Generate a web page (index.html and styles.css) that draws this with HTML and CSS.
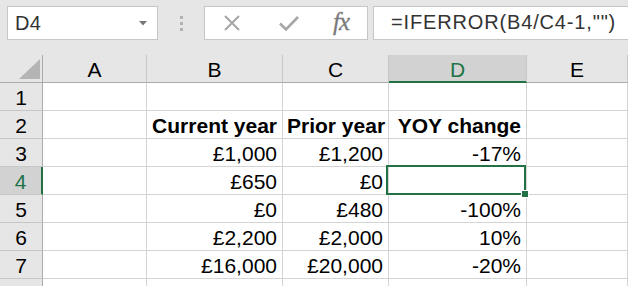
FILE: index.html
```html
<!DOCTYPE html>
<html>
<head>
<meta charset="utf-8">
<link rel="stylesheet" href="styles.css">
</head>
<body>
<div class="app">
  <div class="toolbar">
    <div class="namebox">
      <span class="name">D4</span>
      <svg class="caret" width="8" height="5" viewBox="0 0 8 5"><path d="M0 0H8L4 4.5Z" fill="#777"/></svg>
    </div>
    <div class="grip"><i></i><i></i><i></i></div>
    <div class="fbuttons">
      <svg class="ico" width="20" height="20" viewBox="0 0 20 20"><path d="M3 3L17 17M17 3L3 17" stroke="#a6a6a6" stroke-width="2" fill="none"/></svg>
      <svg class="ico" width="22" height="20" viewBox="0 0 22 20"><path d="M2 10.5L8 16.5L20 4" stroke="#a6a6a6" stroke-width="2.6" fill="none"/></svg>
      <span class="fx">fx</span>
    </div>
    <div class="formula">=IFERROR(B4/C4-1,"")</div>
  </div>
  <div class="grid">
    <div class="corner"><svg width="21" height="20" viewBox="0 0 21 20"><path d="M0 20H21V0Z" fill="#b4b4b4"/></svg></div>
    <div class="ch">A</div><div class="ch">B</div><div class="ch">C</div><div class="ch sel">D</div><div class="ch">E</div>

    <div class="rh">1</div><div class="c"></div><div class="c"></div><div class="c"></div><div class="c"></div><div class="c"></div>

    <div class="rh">2</div><div class="c"></div><div class="c b">Current year</div><div class="c b">Prior year</div><div class="c b">YOY change</div><div class="c"></div>

    <div class="rh">3</div><div class="c"></div><div class="c">£1,000</div><div class="c">£1,200</div><div class="c">-17%</div><div class="c"></div>

    <div class="rh sel">4</div><div class="c"></div><div class="c">£650</div><div class="c">£0</div><div class="c active"><span class="selbox"><span class="handle"></span></span></div><div class="c"></div>

    <div class="rh">5</div><div class="c"></div><div class="c">£0</div><div class="c">£480</div><div class="c">-100%</div><div class="c"></div>

    <div class="rh">6</div><div class="c"></div><div class="c">£2,200</div><div class="c">£2,000</div><div class="c">10%</div><div class="c"></div>

    <div class="rh">7</div><div class="c"></div><div class="c">£16,000</div><div class="c">£20,000</div><div class="c">-20%</div><div class="c"></div>

    <div class="rh">8</div><div class="c"></div><div class="c"></div><div class="c"></div><div class="c"></div><div class="c"></div>
  </div>
</div>
</body>
</html>
```

FILE: styles.css
```css
html, body {
  margin: 0;
  padding: 0;
}
body {
  width: 628px;
  height: 286px;
  overflow: hidden;
  background: #e6e6e6;
  font-family: "Liberation Sans", Arial, sans-serif;
}
.app {
  width: 628px;
}
.toolbar {
  height: 55px;
  box-sizing: border-box;
  padding: 6px 0 0 7px;
  display: flex;
  align-items: flex-start;
  background: #e6e6e6;
}
.namebox {
  width: 151px;
  height: 34px;
  box-sizing: border-box;
  border: 1px solid #c6c6c6;
  background: #fff;
  display: flex;
  align-items: center;
  justify-content: space-between;
  padding: 0 10px 0 7px;
}
.name {
  font-size: 20px;
  color: #333;
  letter-spacing: 0.3px;
}
.caret {
  margin-top: 1px;
}
.grip {
  width: 46px;
  height: 34px;
  display: flex;
  flex-direction: column;
  align-items: center;
  justify-content: center;
  gap: 3px;
}
.grip i {
  display: block;
  width: 3px;
  height: 3px;
  background: #b3b3b3;
}
.fbuttons {
  width: 164px;
  height: 34px;
  box-sizing: border-box;
  border: 1px solid #c6c6c6;
  background: #fff;
  display: flex;
  align-items: center;
  padding-left: 17px;
}
.fbuttons .ico:nth-child(2) {
  margin-left: 36px;
}
.fx {
  font-family: "Liberation Serif", "Times New Roman", serif;
  font-style: italic;
  font-size: 25px;
  color: #7a7a7a;
  margin-left: 33px;
  margin-top: -3px;
  letter-spacing: -1px;
  -webkit-text-stroke: 0.3px #7a7a7a;
}
.formula {
  margin-left: 5px;
  flex: 1;
  height: 34px;
  box-sizing: border-box;
  border: 1px solid #c6c6c6;
  border-right: none;
  background: #fff;
  font-size: 20px;
  letter-spacing: 0.85px;
  color: #333;
  line-height: 31px;
  padding-left: 17px;
  white-space: nowrap;
}
.grid {
  display: grid;
  grid-template-columns: 43px 104px 136px 106px 138px 1fr;
  grid-auto-rows: 28px;
  background: #fff;
}
.corner, .ch, .rh {
  background: #e6e6e6;
  box-sizing: border-box;
  font-size: 21px;
  color: #000;
}
.corner {
  border-right: 1px solid #ababab;
  border-bottom: 1px solid #ababab;
  display: flex;
  align-items: flex-end;
  justify-content: flex-end;
  padding: 0 2px 3px 0;
}
.ch {
  border-right: 1px solid #c6c6c6;
  border-bottom: 1px solid #ababab;
  text-align: center;
  line-height: 27px;
  padding-top: 1px;
}
.ch.sel {
  background: #d2d2d2;
  color: #217346;
  border-bottom: 2px solid #217346;
}
.rh {
  border-right: 1px solid #ababab;
  border-bottom: 1px solid #c6c6c6;
  text-align: center;
  line-height: 27px;
  padding-top: 1px;
}
.rh.sel {
  background: #d2d2d2;
  color: #217346;
  border-right: 2px solid #217346;
}
.c {
  box-sizing: border-box;
  border-right: 1px solid #d4d4d4;
  border-bottom: 1px solid #d4d4d4;
  font-size: 21px;
  line-height: 25px;
  padding: 2px 5px 0 4px;
  text-align: right;
  white-space: nowrap;
  color: #000;
}
.c.b {
  font-weight: bold;
}
.c.active {
  position: relative;
}
.selbox {
  position: absolute;
  left: -3px;
  top: -2px;
  right: 0;
  bottom: -1px;
  border: 2px solid #217346;
}
.handle {
  position: absolute;
  right: -5px;
  bottom: -5px;
  width: 6px;
  height: 6px;
  background: #217346;
  border: 1px solid #fff;
}
```
